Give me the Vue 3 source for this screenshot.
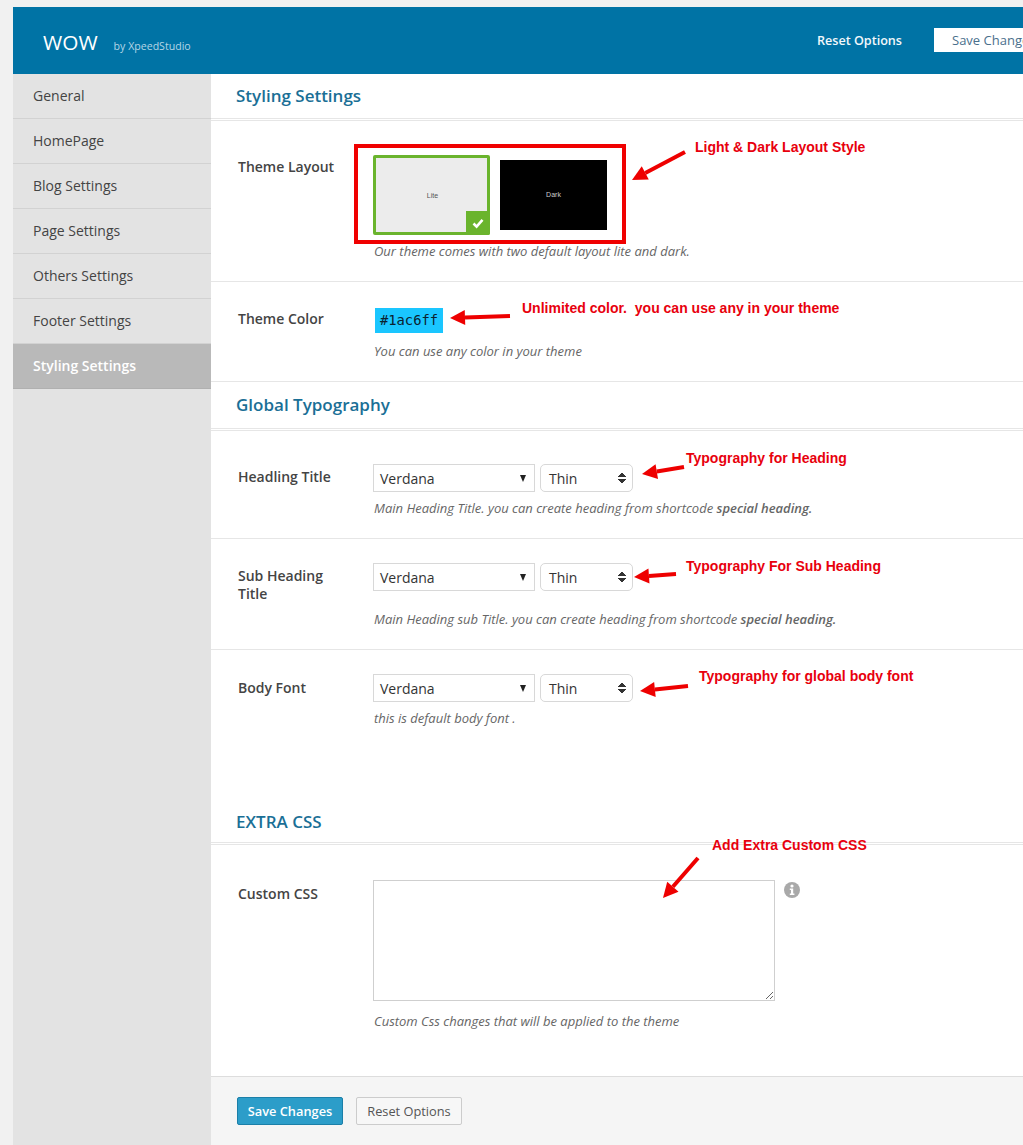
<script setup>
const menu = ['General', 'HomePage', 'Blog Settings', 'Page Settings', 'Others Settings', 'Footer Settings', 'Styling Settings']

// red annotations drawn on top of the screenshot
const notes = [
  { text: 'Light & Dark Layout Style', x: 695, y: 138 },
  { text: 'Unlimited color.  you can use any in your theme', x: 522, y: 299 },
  { text: 'Typography for Heading', x: 686, y: 449 },
  { text: 'Typography For Sub Heading', x: 686, y: 557 },
  { text: 'Typography for global body font', x: 699, y: 667 },
  { text: 'Add Extra Custom CSS', x: 712, y: 836 }
]

const arrows = [
  [685, 152, 632, 180],
  [510, 316, 450, 318],
  [684, 467, 642, 474],
  [676, 574, 634, 577],
  [688, 686, 640, 691],
  [698, 858, 663, 898]
].map(([x1, y1, x2, y2]) => {
  const len = Math.hypot(x2 - x1, y2 - y1)
  const ux = (x2 - x1) / len
  const uy = (y2 - y1) / len
  const bx = x2 - ux * 15
  const by = y2 - uy * 15
  return {
    x1,
    y1,
    x2: bx,
    y2: by,
    head: `${x2},${y2} ${bx - uy * 7.5},${by + ux * 7.5} ${bx + uy * 7.5},${by - ux * 7.5}`
  }
})
</script>

<template>
  <div class="page">
    <div class="panel">
      <header class="topbar">
        <div class="brand">
          <span class="brand-name">WOW</span>
          <span class="brand-by">by XpeedStudio</span>
        </div>
        <div class="top-actions">
          <span class="top-reset">Reset Options</span>
          <span class="top-sep"></span>
          <span class="top-save">Save Changes</span>
        </div>
      </header>

      <div class="columns">
        <nav class="sidebar">
          <div v-for="item in menu" :key="item" class="menu-item" :class="{ active: item === 'Styling Settings' }">
            {{ item }}
          </div>
        </nav>

        <main class="content">
          <h2 class="section-title first">Styling Settings</h2>

          <section class="row row-layout">
            <div class="label">Theme Layout</div>
            <div>
              <div class="thumbs">
                <div class="thumb-lite">
                  Lite
                  <span class="check">
                    <svg width="12" height="12" viewBox="0 0 12 12">
                      <path d="M1.5 6.5 L4.6 9.6 L10.5 2.8" fill="none" stroke="#fff" stroke-width="2.6" />
                    </svg>
                  </span>
                </div>
                <div class="thumb-dark">Dark</div>
              </div>
              <p class="desc desc-layout">Our theme comes with two default layout lite and dark.</p>
            </div>
          </section>

          <section class="row row-color">
            <div class="label">Theme Color</div>
            <div>
              <div class="swatch">#1ac6ff</div>
              <p class="desc desc-color">You can use any color in your theme</p>
            </div>
          </section>

          <h2 class="section-title">Global Typography</h2>

          <section class="row row-font">
            <div class="label">Headling Title</div>
            <div>
              <div class="selects">
                <div class="select-font">Verdana<i class="caret"></i></div>
                <div class="select-weight">Thin<i class="updown"></i></div>
              </div>
              <p class="desc">Main Heading Title. you can create heading from shortcode <b>special heading.</b></p>
            </div>
          </section>

          <section class="row row-font sub">
            <div class="label">Sub Heading Title</div>
            <div>
              <div class="selects">
                <div class="select-font">Verdana<i class="caret"></i></div>
                <div class="select-weight">Thin<i class="updown"></i></div>
              </div>
              <p class="desc">Main Heading sub Title. you can create heading from shortcode <b>special heading.</b></p>
            </div>
          </section>

          <section class="row row-font last">
            <div class="label">Body Font</div>
            <div>
              <div class="selects">
                <div class="select-font">Verdana<i class="caret"></i></div>
                <div class="select-weight">Thin<i class="updown"></i></div>
              </div>
              <p class="desc">this is default body font .</p>
            </div>
          </section>

          <h2 class="section-title extra">EXTRA CSS</h2>

          <section class="row row-css">
            <div class="label">Custom CSS</div>
            <div>
              <div class="css-field">
                <textarea class="css-input"></textarea>
                <svg class="info" width="16" height="16" viewBox="0 0 16 16">
                  <circle cx="8" cy="8" r="8" fill="#a9a9a9" />
                  <circle cx="8" cy="4" r="1.6" fill="#fff" />
                  <path d="M5.8 6.6 H9.2 V11.6 H10.4 V13 H5.8 V11.6 H7 V8 H5.8 Z" fill="#fff" />
                </svg>
              </div>
              <p class="desc desc-css">Custom Css changes that will be applied to the theme</p>
            </div>
          </section>

          <footer class="footer">
            <button class="btn-save">Save Changes</button>
            <button class="btn-reset">Reset Options</button>
          </footer>
        </main>
      </div>
    </div>

    <!-- annotations over the screenshot -->
    <div class="red-box"></div>
    <svg class="arrows" width="1023" height="1145">
      <g v-for="(a, i) in arrows" :key="i">
        <line :x1="a.x1" :y1="a.y1" :x2="a.x2" :y2="a.y2" stroke="#ee0000" stroke-width="4" />
        <polygon :points="a.head" fill="#ee0000" />
      </g>
    </svg>
    <span v-for="n in notes" :key="n.text" class="note" :style="{ left: n.x + 'px', top: n.y + 'px' }">{{ n.text }}</span>
  </div>
</template>

<style>
html, body {
  margin: 0;
  background: #f1f1f1;
}
</style>

<style scoped>
.page {
  position: relative;
  width: 1023px;
  height: 1145px;
  padding: 7px 0 0 13px;
  box-sizing: border-box;
  overflow: hidden;
  font-family: "Open Sans", "Liberation Sans", sans-serif;
  color: #444;
}
.panel {
  width: 1010px;
  height: 1138px;
  display: flex;
  flex-direction: column;
}
.topbar {
  flex: none;
  height: 67px;
  background: #0073a5;
  display: flex;
  align-items: center;
  padding-left: 30px;
}
.brand {
  display: flex;
  align-items: baseline;
  gap: 16px;
  margin-top: 3px;
}
.brand-name {
  font-size: 20.8px;
  color: #fff;
}
.brand-by {
  font-size: 10.6px;
  color: #b5d6e6;
}
.top-actions {
  display: flex;
  align-items: center;
  margin-left: auto;
  margin-top: -2px;
  width: 206px;
  flex: none;
  white-space: nowrap;
  overflow: hidden;
}
.top-reset {
  width: 85px;
  margin-top: 2px;
  font-size: 12.6px;
  font-weight: 600;
  color: #f2f8fb;
}
.top-sep {
  width: 1px;
  height: 15px;
  background: #3d93b9;
  margin: 0 16px;
}
.top-save {
  background: #fff;
  color: #4a6f8c;
  font-size: 13px;
  line-height: 24px;
  padding: 0 18px;
  width: 130px;
  flex: none;
}
.columns {
  flex: 1;
  display: grid;
  grid-template-columns: 198px 1fr;
  min-height: 0;
}
.sidebar {
  background: #e3e3e3;
}
.menu-item {
  height: 45px;
  line-height: 44px;
  box-sizing: border-box;
  padding-left: 20px;
  font-size: 14px;
  color: #444;
  border-bottom: 1px solid #d2d2d2;
}
.menu-item.active {
  background: #b9b9b9;
  color: #fff;
  font-weight: 600;
  border-bottom-color: #b0b0b0;
}
.content {
  background: #fff;
  display: flex;
  flex-direction: column;
  min-width: 0;
}
.section-title {
  margin: 0;
  height: 46px;
  line-height: 46px;
  padding-left: 25px;
  font-size: 17px;
  font-weight: 600;
  color: #1a6f96;
  border-bottom: 3px double #e6e6e6;
}
.section-title.first {
  height: 44px;
  line-height: 44px;
}
.section-title.extra {
  line-height: 51px;
}
.row {
  display: grid;
  grid-template-columns: 135px 1fr;
  padding: 0 0 0 27px;
  box-sizing: border-box;
  border-bottom: 1px solid #e6e6e6;
}
.label {
  font-size: 14px;
  font-weight: 600;
  color: #444;
  line-height: 18px;
}
.desc {
  margin: 0;
  font-size: 13px;
  font-style: italic;
  color: #666;
  line-height: 18px;
  padding-left: 1px;
  white-space: nowrap;
}
.desc b {
  font-weight: 600;
}
.row-layout {
  height: 161px;
  padding-top: 37px;
}
.thumbs {
  display: flex;
  align-items: center;
  margin-top: -3px;
  gap: 10px;
}
.thumb-lite {
  position: relative;
  width: 117px;
  height: 80px;
  box-sizing: border-box;
  border: 3px solid #6ab42d;
  border-radius: 2px;
  background: #ececec;
  display: flex;
  align-items: center;
  justify-content: center;
  font-family: "Liberation Sans", sans-serif;
  font-size: 7px;
  color: #555;
  padding-left: 2px;
}
.check {
  position: absolute;
  right: -3px;
  bottom: -3px;
  width: 24px;
  height: 24px;
  background: #6ab42d;
  display: flex;
  align-items: center;
  justify-content: center;
  border-radius: 0 0 2px 0;
}
.thumb-dark {
  width: 107px;
  height: 70px;
  background: #000;
  color: #ccc;
  display: flex;
  align-items: center;
  justify-content: center;
  font-family: "Liberation Sans", sans-serif;
  font-size: 7px;
  padding-bottom: 2px;
  box-sizing: border-box;
}
.desc-layout {
  margin-top: 7px;
}
.row-color {
  height: 100px;
  padding-top: 28px;
}
.swatch {
  width: 68px;
  height: 25px;
  margin: -2px 0 0 2px;
  background: #1ac6ff;
  color: #0b2230;
  font-family: "DejaVu Sans Mono", "Liberation Mono", monospace;
  font-size: 13.8px;
  line-height: 25px;
  text-align: center;
}
.desc-color {
  margin-top: 9px;
}
.row-font {
  height: 108px;
  padding-top: 37px;
}
.row-font.sub {
  height: 111px;
  padding-top: 28px;
}
.row-font.sub .desc {
  margin-top: 19px;
}
.row-font.sub .label {
  max-width: 100px;
}
.row-font.last {
  height: 146px;
  padding-top: 28px;
  border-bottom: 0;
}
.row-font.last .label {
  padding-top: 1px;
}
.selects {
  display: flex;
  gap: 5px;
  margin-top: -4px;
}
.select-font,
.select-weight {
  position: relative;
  height: 28px;
  box-sizing: border-box;
  border: 1px solid #d8d8d8;
  font-size: 14px;
  line-height: 27px;
  color: #333;
  background: #fff;
}
.select-font {
  width: 162px;
  padding-left: 6px;
}
.select-weight {
  width: 93px;
  padding-left: 8px;
  border-radius: 5px;
}
.caret {
  position: absolute;
  right: 8px;
  top: 10px;
  border: 3.5px solid transparent;
  border-top: 7px solid #222;
  border-bottom: 0;
}
.updown {
  position: absolute;
  right: 6px;
  top: 7px;
  width: 8px;
  height: 12px;
  background:
    linear-gradient(to bottom right, transparent 49%, #333 50%) 0 0 / 4px 5px no-repeat,
    linear-gradient(to bottom left, transparent 49%, #333 50%) 4px 0 / 4px 5px no-repeat,
    linear-gradient(to top right, transparent 49%, #333 50%) 0 7px / 4px 5px no-repeat,
    linear-gradient(to top left, transparent 49%, #333 50%) 4px 7px / 4px 5px no-repeat;
}
.row-font .desc {
  margin-top: 7px;
}
.row-css {
  flex: none;
  height: 232px;
  padding-top: 35px;
  border-bottom: 1px solid #ddd;
}
.row-css .label {
  padding-top: 5px;
}
.css-field {
  display: flex;
  align-items: flex-start;
  gap: 9px;
}
.css-input {
  display: block;
  width: 402px;
  height: 121px;
  box-sizing: border-box;
  border: 1px solid #cfcfcf;
  outline: 0;
  margin: 0;
  background: #fff;
}
.info {
  margin-top: 2px;
}
.desc-css {
  margin-top: 11px;
}
.footer {
  flex: 1;
  background: #f5f5f5;
  display: flex;
  align-items: flex-start;
  gap: 13px;
  padding: 20px 0 0 26px;
}
.btn-save,
.btn-reset {
  width: 106px;
  height: 28px;
  font-family: inherit;
  font-size: 12.8px;
  border-radius: 2px;
  padding: 0;
  cursor: pointer;
}
.btn-save {
  background: #2c9dc9;
  border: 1px solid #1b7fa8;
  color: #fff;
  font-weight: 600;
}
.btn-reset {
  background: #f7f7f7;
  border: 1px solid #ccc;
  color: #555;
}
.red-box {
  position: absolute;
  left: 354px;
  top: 144px;
  width: 272px;
  height: 100px;
  box-sizing: border-box;
  border: 4px solid #f00000;
}
.arrows {
  position: absolute;
  left: 0;
  top: 0;
  pointer-events: none;
}
.note {
  position: absolute;
  font-family: "Liberation Sans", Arial, sans-serif;
  font-size: 14px;
  font-weight: 700;
  line-height: 18px;
  color: #e8000d;
  white-space: pre;
}
</style>
